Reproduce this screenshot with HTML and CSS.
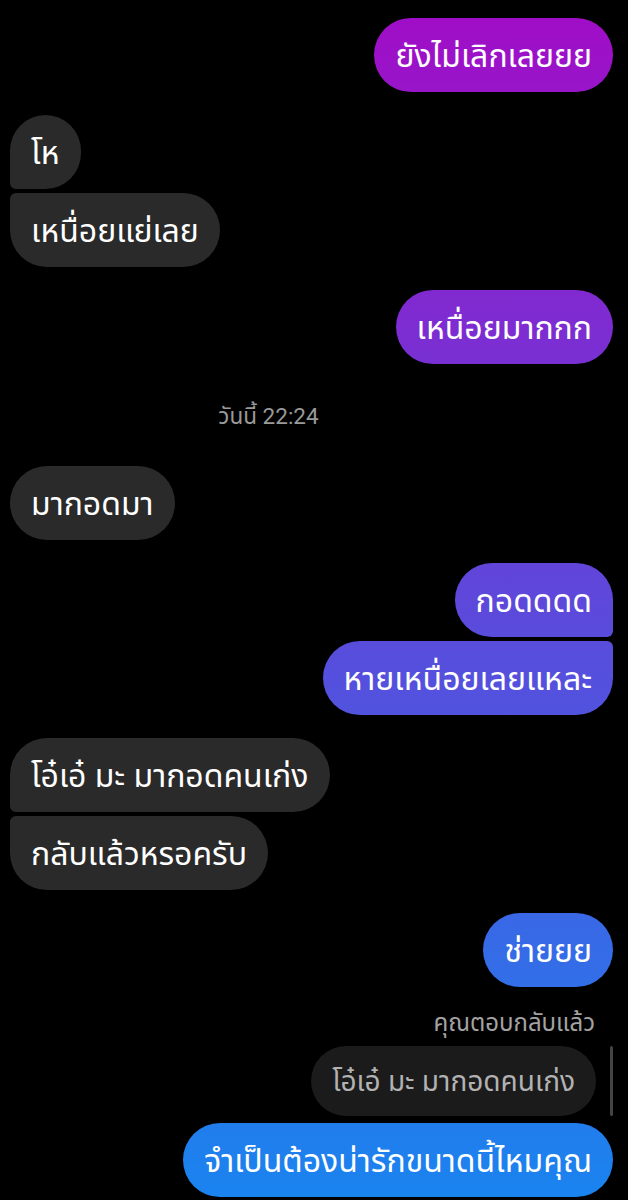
FILE: index.html
```html
<!DOCTYPE html>
<html lang="th">
	<head>
		<meta charset="utf-8" />
		<title>แชท</title>
		<link rel="stylesheet" href="styles.css">
	</head>
	<body>
		<div id="chat">
			<div class="group out">
				<div class="bubble">ยังไม่เลิกเลยยย</div>
			</div>

			<div class="group in">
				<div class="bubble first">โห</div>
				<div class="bubble last">เหนื่อยแย่เลย</div>
			</div>

			<div class="group out">
				<div class="bubble">เหนื่อยมากกก</div>
			</div>

			<p class="time">วันนี้ 22:24</p>

			<div class="group in">
				<div class="bubble">มากอดมา</div>
			</div>

			<div class="group out">
				<div class="bubble first">กอดดดด</div>
				<div class="bubble last">หายเหนื่อยเลยแหละ</div>
			</div>

			<div class="group in">
				<div class="bubble first">โอ๋เอ๋ มะ มากอดคนเก่ง</div>
				<div class="bubble last">กลับแล้วหรอครับ</div>
			</div>

			<div class="group out">
				<div class="bubble">ช่ายยย</div>
			</div>

			<div class="group out reply">
				<p class="reply-label">คุณตอบกลับแล้ว</p>
				<div class="quote">
					<div class="quoted">โอ๋เอ๋ มะ มากอดคนเก่ง</div>
				</div>
				<div class="bubble">จำเป็นต้องน่ารักขนาดนี้ไหมคุณ</div>
			</div>
		</div>
	</body>
</html>
```

FILE: styles.css
```css
body{
	margin: 0;
	background-color: #000000;
	font-family: "Noto Sans Thai", "Noto Sans Thai UI", "Noto Sans", Roboto, sans-serif;
}

#chat{
	display: flex;
	flex-direction: column;
	padding: 18px 15px 0 10px;
}

.group{
	display: flex;
	flex-direction: column;
	gap: 4px;
	margin-bottom: 23px;
}

.group.in{
	align-items: flex-start;
}

.group.out{
	align-items: flex-end;
}

.bubble{
	font-size: 32px;
	line-height: 40px;
	height: 40px;
	padding: 19px 21px 15px 21px;
	border-radius: 37px;
	color: #ffffff;
	white-space: nowrap;
}

.in .bubble{
	background-color: #2a2a2a;
}

.out .bubble{
	background-image: linear-gradient(to bottom, #a20cc6 0px, #1984ef 1200px);
	background-attachment: fixed;
}

.in .bubble.first{
	border-bottom-left-radius: 6px;
}
.in .bubble.last{
	border-top-left-radius: 6px;
}
.out .bubble.first{
	border-bottom-right-radius: 6px;
}
.out .bubble.last{
	border-top-right-radius: 6px;
}

.time{
	margin: 14px 0 35px 0;
	padding-right: 86px;
	text-align: center;
	font-family: Roboto, "Noto Sans Thai", sans-serif;
	font-size: 22.5px;
	line-height: 30px;
	color: #9a9a9a;
}

.reply{
	gap: 0;
}

.reply-label{
	margin: 0 18px 8px 0;
	font-size: 24px;
	line-height: 28px;
	color: #a3a3a3;
}

.quote{
	display: flex;
	gap: 14px;
	padding-bottom: 7px;
}

.quote::after{
	content: "";
	width: 3px;
	border-radius: 2px;
	background-color: #444444;
}

.quoted{
	font-size: 28px;
	line-height: 38px;
	height: 38px;
	padding: 18px 21px 14px 21px;
	border-radius: 35px;
	background-color: #1b1b1b;
	color: #b2b2b2;
	white-space: nowrap;
}
```
